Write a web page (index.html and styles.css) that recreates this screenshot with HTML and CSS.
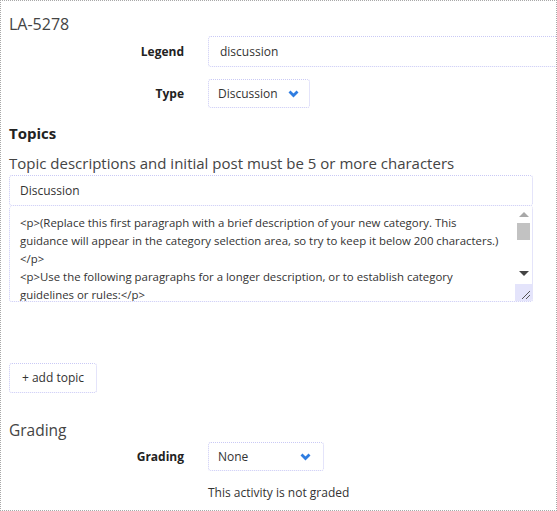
FILE: index.html
```html
<!DOCTYPE html>
<html>
<head>
<meta charset="utf-8">
<link rel="stylesheet" href="styles.css">
</head>
<body>
<div class="frame">
  <div class="title">LA-5278</div>
  <div class="row row-legend">
    <div class="label">Legend</div>
    <div class="box wide">discussion</div>
  </div>
  <div class="row row-type">
    <div class="label">Type</div>
    <div class="box select type-select"><span>Discussion</span><svg class="chev" width="11" height="8" viewBox="0 0 11 8"><path d="M1.5 1.5 L5.5 5.5 L9.5 1.5" fill="none" stroke="#2f7de1" stroke-width="2.8"/></svg></div>
  </div>
  <div class="topics-h">Topics</div>
  <div class="hint">Topic descriptions and initial post must be 5 or more characters</div>
  <div class="topic">
    <div class="box field">Discussion</div>
    <div class="box area">
      <div class="area-text">&lt;p&gt;(Replace this first paragraph with a brief description of your new category. This<br>guidance will appear in the category selection area, so try to keep it below 200 characters.)<br>&lt;/p&gt;<br>&lt;p&gt;Use the following paragraphs for a longer description, or to establish category<br>guidelines or rules:&lt;/p&gt;</div>
      <div class="scrollbar">
        <div class="arrow up"></div>
        <div class="thumb"></div>
        <div class="track"></div>
        <div class="arrow down"></div>
        <div class="corner"><svg width="17" height="17" viewBox="0 0 17 17"><path d="M7 15 L15 7 M11 15 L15 11" stroke="#555" stroke-width="1"/></svg></div>
      </div>
    </div>
  </div>
  <div class="add-wrap"><div class="box add-btn">+ add topic</div></div>
  <div class="grading-h">Grading</div>
  <div class="row row-grading">
    <div class="label">Grading</div>
    <div class="box select grade-select"><span>None</span><svg class="chev" width="11" height="8" viewBox="0 0 11 8"><path d="M1.5 1.5 L5.5 5.5 L9.5 1.5" fill="none" stroke="#2f7de1" stroke-width="2.8"/></svg></div>
  </div>
  <div class="note">This activity is not graded</div>
</div>
</body>
</html>
```

FILE: styles.css
```css
html, body {
  margin: 0;
  padding: 0;
  background: #fff;
}
body {
  font-family: "Open Sans", "Noto Sans", sans-serif;
  color: #333;
  overflow: hidden;
}
.frame {
  box-sizing: border-box;
  width: 557px;
  height: 511px;
  border: 1px dotted #a8a8a8;
  padding: 13px 0 0 8px;
  overflow: hidden;
}
.title {
  font-size: 16px;
  line-height: 20px;
  font-weight: 400;
  color: #444;
}
.row {
  display: flex;
  align-items: center;
  gap: 24px;
}
.label {
  width: 175px;
  flex: none;
  text-align: right;
  font-weight: 700;
  font-size: 12px;
  color: #222;
}
.box {
  box-sizing: border-box;
  border: 1px dotted #c9c9f5;
  border-radius: 3px;
  background: #fff;
  font-size: 12px;
  color: #333;
}
.row-legend { margin-top: 2px; }
.wide {
  width: 360px;
  flex: none;
  height: 31px;
  line-height: 29px;
  padding-left: 11px;
}
.row-type { margin-top: 12px; }
.select {
  height: 29px;
  display: flex;
  align-items: center;
  justify-content: space-between;
  padding: 0 10px 0 9px;
}
.type-select { width: 102px; }
.grade-select { width: 116px; padding-right: 12px; }
.chev { display: block; }
.topics-h {
  margin-top: 15px;
  font-size: 15px;
  line-height: 20px;
  font-weight: 700;
  color: #222;
}
.hint {
  margin-top: 10px;
  font-size: 15px;
  line-height: 20px;
  color: #444;
}
.topic {
  width: 524px;
  margin-top: 2px;
}
.field {
  height: 31px;
  line-height: 29px;
  padding-left: 10px;
}
.area {
  position: relative;
  height: 96px;
  overflow: hidden;
  border-top: none;
}
.area-text {
  padding: 8px 0 0 10px;
  font-size: 11.4px;
  line-height: 18px;
  white-space: nowrap;
  color: #333;
}
.scrollbar {
  position: absolute;
  right: 0;
  top: 0;
  bottom: 0;
  width: 17px;
  background: #fff;
  display: flex;
  flex-direction: column;
  align-items: center;
}
.arrow {
  width: 0;
  height: 0;
  border-left: 5px solid transparent;
  border-right: 5px solid transparent;
}
.arrow.up {
  margin-top: 6px;
  border-bottom: 5px solid #a8a8a8;
}
.thumb {
  margin-top: 6px;
  width: 13px;
  height: 17px;
  background: #c2c2c2;
}
.track { flex: 1; }
.arrow.down {
  border-top: 5px solid #444;
  margin-bottom: 8px;
}
.corner {
  width: 17px;
  height: 17px;
  background: #e4e4fb;
}
.corner svg { display: block; }
.add-wrap {
  margin-top: 61px;
}
.add-btn {
  display: inline-block;
  width: 88px;
  height: 30px;
  line-height: 28px;
  text-align: center;
  font-size: 12px;
}
.grading-h {
  margin-top: 27px;
  font-size: 15.5px;
  line-height: 20px;
  color: #444;
}
.row-grading { margin-top: 2px; }
.note {
  margin-top: 14px;
  padding-left: 199px;
  font-size: 12px;
  line-height: 16px;
  color: #333;
}
```
